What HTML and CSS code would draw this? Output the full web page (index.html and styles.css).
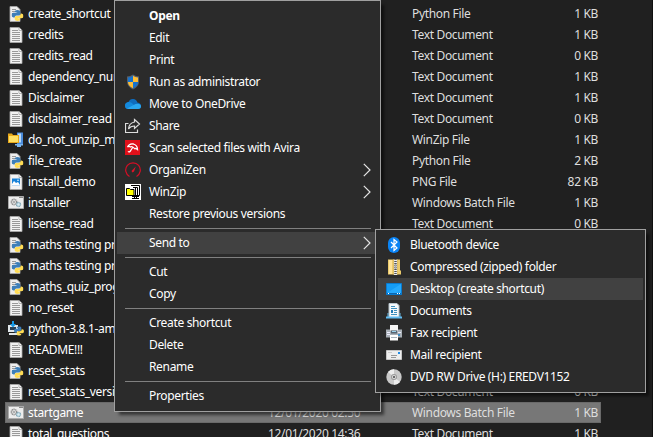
FILE: index.html
```
<!DOCTYPE html>
<html lang="en">
<head>
<meta charset="utf-8">
<title>Files</title>
<link rel="stylesheet" href="styles.css">
</head>
<body>
<svg class="defs" aria-hidden="true">
  <symbol id="page" viewBox="0 0 16 16"><path d="M2 .5h9l3 3v12H2z" fill="#f2f2f2" stroke="#aaa" stroke-width=".8"/><path d="M11 .5v3h3" fill="#fff" stroke="#999" stroke-width=".7"/></symbol>
  <symbol id="txt" viewBox="0 0 16 16"><use href="#page"/><path d="M4 3.5h6M4 5.5h8M4 7.5h8M4 9.5h8M4 11.5h8M4 13.5h8" stroke="#999"/></symbol>
  <symbol id="snakes" viewBox="0 0 12 12"><path d="M3.2 2.2Q3.2.5 6 .5t2.8 1.7v2.6Q8.800 6 7.200 6H5Q3.200 6 3.200 8H2Q0 7.800 0 5.600 0 3.200 2 3.200h4" fill="#3d7eb8"/><path d="M8.800 9.800Q8.800 11.500 6 11.500T3.200 9.800V7.800Q3.200 6.400 5 6.400h2Q9.300 6.400 9.300 4H10q2 .2 2 2.400 0 2.400-2 2.400H6" fill="#ffdc55"/></symbol>
  <symbol id="py" viewBox="0 0 16 16"><path d="M2 .5h7l3 3v12H2z" fill="#eee" stroke="#aaa" stroke-width=".8"/><path d="M4 3.500h4M4 5.500h3M4 7.500h1" stroke="#999"/><use href="#snakes" x="3.500" y="3.500" width="12" height="12"/></symbol>
  <symbol id="pyinst" viewBox="0 0 16 16"><path d="M0 4h10v7H0zM1 12h8v2H1z" fill="#dfe5e9"/><path d="M2 6h6v3H2z" fill="#294257"/><path d="M4 0h2v3h2L5 6.500 2 3h2z" fill="#159bea"/><use href="#snakes" x="6" y="5" width="10" height="10"/></symbol>
  <symbol id="bat" viewBox="0 0 16 16"><path d="M.5 1.500h15v12H.5z" fill="#ececec" stroke="#aaa"/><path d="M11 2.500h4" stroke="#888"/><circle cx="6" cy="7" r="2.700" fill="#ddd" stroke="#8c8c8c" stroke-width="1.500" stroke-dasharray="1.200 .5"/><circle cx="6" cy="7" r=".8" fill="#777"/><circle cx="10.500" cy="9.500" r="2" fill="#d8ebf2" stroke="#78a2b4" stroke-width="1.300" stroke-dasharray="1 .4"/></symbol>
  <symbol id="png" viewBox="0 0 16 16"><use href="#page"/><path d="M4 4.500h8v7H4z" fill="#1681d8"/><path d="M4 10l2-3 2 2 2-1 2 3v.5H4z" fill="#fff"/><circle cx="10" cy="6.200" r=".8" fill="#fff"/></symbol>
  <symbol id="zip" viewBox="0 0 16 16"><path d="M9 .5h6v11.500H9z" fill="#4b8ddd"/><path d="M10 1.500h3v9h-3z" fill="#b9d9f7"/><path d="M0 1.500h4l1 1.500h6v8H0z" fill="#e8a91b"/><path d="M1 4h9v6H1z" fill="#ffe063"/><path d="M7 12h8v1.500h-2V15H9v-1.500H7z" fill="#79b5f0"/></symbol>
  <symbol id="shield" viewBox="0 0 16 16"><path d="M8 .5q3 2 6 2v5q0 5-6 8-6-3-6-8v-5q3 0 6-2z" fill="#55606b"/><path d="M8 1.700V8H3V3.500q3-.3 5-1.800zM8 8h5q0 4-5 6.300z" fill="#1673cf"/><path d="M8 1.700V8h5V3.500q-3-.3-5-1.800zM8 8H3q0 4 5 6.300z" fill="#ffbd35"/></symbol>
  <symbol id="cloud" viewBox="0 0 16 16"><path d="M0 9.500Q0 6.500 3.500 6 5 2.500 8.300 3q3 .2 4.100 3.500Q16 7 16 10q0 3-3 3H3.500Q0 13 0 9.500z" fill="#0f6cbd"/><path d="M3.500 6Q6 5.800 8 8l5 4.500L3.500 13Q0 13 0 9.500 0 6.700 3.500 6z" fill="#1489dc"/><path d="M2 12.500L10.500 8q5.300-1 5.500 2.300Q16 13 13 13H4z" fill="#2aa7f1"/></symbol>
  <symbol id="share" viewBox="0 0 16 16"><path d="M3.500 5.500h-3v9h12v-3" fill="none" stroke="#ddd" stroke-width="1.200"/><path d="M9.500 1.500L14.500 6l-5 4.500V8Q5.500 8 3.500 11q.5-6 6-7z" fill="none" stroke="#ddd" stroke-width="1.200"/></symbol>
  <symbol id="avira" viewBox="0 0 16 16"><path d="M0 0h15v15H0z" fill="#e0101a"/><path d="M2.500 7Q4.500 3 8.500 4q4 1.200 4 5.500-1.500-1.500-3-.8Q7 5.700 5.500 7 4 5.800 2.500 7zM8 7l-3 4.500q-1 1-2-.2" fill="none" stroke="#fff" stroke-width="1.300"/></symbol>
  <symbol id="gauge" viewBox="0 0 16 16"><path d="M4.500 14.500A7.300 7.300 0 1 1 11.500 14.500" fill="none" stroke="#d50e25" stroke-width="1.200"/><path d="M10.800 4.500L9 9.500 7.500 10.500 6.500 9z" fill="#e01328"/></symbol>
  <symbol id="winzip" viewBox="0 0 16 16"><path d="M0 0h16v16H0z" fill="#fff"/><path d="M6 1.500h8.500v10H9" fill="none" stroke="#000"/><path d="M8 3.500h4.500v8M10.500 4v9" fill="none" stroke="#000"/><path d="M1.500 4.500h3l1 1H9v6H1.500z" fill="#ff0" stroke="#000"/><path d="M7 12.500h7M9.500 13v1.500M11.500 13v1.500M7 14.500h7" stroke="#000"/></symbol>
  <symbol id="bt" viewBox="0 0 16 16"><rect x="2" width="12" height="16" rx="6" fill="#0a84f5"/><path d="M5 5l6 6-3 2.500v-11L11 5l-6 6" fill="none" stroke="#fff" stroke-width="1.200"/></symbol>
  <symbol id="zfold" viewBox="0 0 16 16"><path d="M2 .5h12v11h1v4H2z" fill="#ebca6c"/><path d="M3 1h3v14H3z" fill="#ffe49a"/><path d="M7.500 0h4v16h-4z" fill="#d6b75f"/><path d="M9.500 0v16" stroke="#eee" stroke-width="3"/><path d="M9.500 0v16" stroke="#555" stroke-width="2.500" stroke-dasharray="1 1"/><path d="M8.500 5h2v5h-2z" fill="#aaa"/></symbol>
  <symbol id="desk" viewBox="0 0 16 16"><path d="M.5 2.500h15v11H.5z" fill="#159cf5" stroke="#087bd0"/><path d="M1 12L15 3v9z" fill="#27aafd"/><path d="M1 12h14v1H1z" fill="#0b67b0"/><path d="M2 12.500h1M11 12.500h1M13 12.500h1" stroke="#fff"/></symbol>
  <symbol id="docs" viewBox="0 0 16 16"><path d="M3 .5h8l2 2v12H3z" fill="#f5f8fa" stroke="#b8c4cc"/><path d="M5 3.500h4M5 5.500h6M8 7.500h3M8 9.500h3M5 11.500h6" stroke="#3e8fbd"/><path d="M5 7h2v3H5z" fill="#247ab5"/><path d="M2 10v4M14 10v4" stroke="#6dbbe5"/><path d="M0 13.500h16v2H0z" fill="#63bdf2"/></symbol>
  <symbol id="fax" viewBox="0 0 16 16"><path d="M4 0h8v6H4z" fill="#f5f5f5"/><path d="M0 4.500h4v1h8v-1h4v8H0z" fill="#a9b0b7"/><path d="M5 5.500h6v3H5z" fill="#576673"/><path d="M6 6.500h4" stroke="#9dd4ef"/><path d="M1 7.500h3M12 7.500h3M1 9.500h3" stroke="#eef"/><path d="M12 9h2v2h-2z" fill="#3f8ec7"/><path d="M4 10h8v5.500H4z" fill="#fff"/><path d="M5 12.500h6" stroke="#a7b4bd"/></symbol>
  <symbol id="mail" viewBox="0 0 16 16"><path d="M.5 3.500h15v9H.5z" fill="#eee" stroke="#c5c5c5"/><path d="M2 5.500h4" stroke="#ccc"/><path d="M5 8.500h6M5 10.500h5" stroke="#999"/><path d="M12 5h2v2h-2z" fill="#208be4"/></symbol>
  <symbol id="disc" viewBox="0 0 16 16"><circle cx="8" cy="8" r="7.700" fill="#c9c9c9"/><path d="M8 8L2 3A7.700 7.700 0 0 1 8 .3zM8 8l6 5a7.700 7.700 0 0 1-6 2.700z" fill="#ececec"/><circle cx="8" cy="8" r="3" fill="#999"/><circle cx="8" cy="8" r="2" fill="#ddd"/><circle cx="8" cy="8" r="1" fill="#444"/></symbol>
  <symbol id="arrow" viewBox="0 0 8 14"><path d="M.8 .8L7 7 .8 13.200" fill="none" stroke="#e5e5e5" stroke-width="1.200"/></symbol>
</svg>
<main class="window">
  <div class="files">
    <div class="row"><svg><use href="#py"/></svg><span class="name">create_shortcut</span><span class="date"></span><span class="type">Python File</span><span class="size">1 KB</span></div>
    <div class="row"><svg><use href="#txt"/></svg><span class="name">credits</span><span class="date"></span><span class="type">Text Document</span><span class="size">1 KB</span></div>
    <div class="row"><svg><use href="#txt"/></svg><span class="name">credits_read</span><span class="date"></span><span class="type">Text Document</span><span class="size">0 KB</span></div>
    <div class="row"><svg><use href="#txt"/></svg><span class="name">dependency_num</span><span class="date"></span><span class="type">Text Document</span><span class="size">1 KB</span></div>
    <div class="row"><svg><use href="#txt"/></svg><span class="name">Disclaimer</span><span class="date"></span><span class="type">Text Document</span><span class="size">1 KB</span></div>
    <div class="row"><svg><use href="#txt"/></svg><span class="name">disclaimer_read</span><span class="date"></span><span class="type">Text Document</span><span class="size">0 KB</span></div>
    <div class="row"><svg><use href="#zip"/></svg><span class="name">do_not_unzip_m</span><span class="date"></span><span class="type">WinZip File</span><span class="size">1 KB</span></div>
    <div class="row"><svg><use href="#py"/></svg><span class="name">file_create</span><span class="date"></span><span class="type">Python File</span><span class="size">2 KB</span></div>
    <div class="row"><svg><use href="#png"/></svg><span class="name">install_demo</span><span class="date"></span><span class="type">PNG File</span><span class="size">82 KB</span></div>
    <div class="row"><svg><use href="#bat"/></svg><span class="name">installer</span><span class="date"></span><span class="type">Windows Batch File</span><span class="size">1 KB</span></div>
    <div class="row"><svg><use href="#txt"/></svg><span class="name">lisense_read</span><span class="date"></span><span class="type">Text Document</span><span class="size">0 KB</span></div>
    <div class="row"><svg><use href="#py"/></svg><span class="name">maths testing pr</span></div>
    <div class="row"><svg><use href="#py"/></svg><span class="name">maths testing pr</span></div>
    <div class="row"><svg><use href="#py"/></svg><span class="name">maths_quiz_prog</span></div>
    <div class="row"><svg><use href="#txt"/></svg><span class="name">no_reset</span></div>
    <div class="row"><svg><use href="#pyinst"/></svg><span class="name">python-3.8.1-am</span></div>
    <div class="row"><svg><use href="#txt"/></svg><span class="name">README!!!</span></div>
    <div class="row"><svg><use href="#py"/></svg><span class="name">reset_stats</span></div>
    <div class="row"><svg><use href="#txt"/></svg><span class="name">reset_stats_versio</span><span class="date"></span><span class="type">Text Document</span><span class="size">0 KB</span></div>
    <div class="row selected"><svg><use href="#bat"/></svg><span class="name">startgame</span><span class="date">12/01/2020 02:50</span><span class="type">Windows Batch File</span><span class="size">1 KB</span></div>
    <div class="row"><svg><use href="#txt"/></svg><span class="name">total_questions</span><span class="date">12/01/2020 14:36</span><span class="type">Text Document</span><span class="size">1 KB</span></div>
  </div>
  <div class="menu context">
    <div class="item"><i></i><b>Open</b></div>
    <div class="item"><i></i><span>Edit</span></div>
    <div class="item"><i></i><span>Print</span></div>
    <div class="item"><svg><use href="#shield"/></svg><span>Run as administrator</span></div>
    <div class="item"><svg><use href="#cloud"/></svg><span>Move to OneDrive</span></div>
    <div class="item"><svg><use href="#share"/></svg><span>Share</span></div>
    <div class="item"><svg><use href="#avira"/></svg><span>Scan selected files with Avira</span></div>
    <div class="item"><svg><use href="#gauge"/></svg><span>OrganiZen</span><svg class="arrow"><use href="#arrow"/></svg></div>
    <div class="item"><svg><use href="#winzip"/></svg><span>WinZip</span><svg class="arrow"><use href="#arrow"/></svg></div>
    <div class="item"><i></i><span>Restore previous versions</span></div>
    <hr>
    <div class="item active"><i></i><span>Send to</span><svg class="arrow"><use href="#arrow"/></svg></div>
    <hr>
    <div class="item"><i></i><span>Cut</span></div>
    <div class="item"><i></i><span>Copy</span></div>
    <hr>
    <div class="item"><i></i><span>Create shortcut</span></div>
    <div class="item"><i></i><span>Delete</span></div>
    <div class="item"><i></i><span>Rename</span></div>
    <hr>
    <div class="item"><i></i><span>Properties</span></div>
  </div>
  <div class="menu submenu">
    <div class="item"><svg><use href="#bt"/></svg><span>Bluetooth device</span></div>
    <div class="item"><svg><use href="#zfold"/></svg><span>Compressed (zipped) folder</span></div>
    <div class="item active"><svg><use href="#desk"/></svg><span>Desktop (create shortcut)</span></div>
    <div class="item"><svg><use href="#docs"/></svg><span>Documents</span></div>
    <div class="item"><svg><use href="#fax"/></svg><span>Fax recipient</span></div>
    <div class="item"><svg><use href="#mail"/></svg><span>Mail recipient</span></div>
    <div class="item"><svg><use href="#disc"/></svg><span>DVD RW Drive (H:) EREDV1152</span></div>
  </div>
</main>
</body>
</html>
```
FILE: styles.css
```
* { box-sizing: border-box; }
body { margin: 0; background: #202020; }
.defs { position: absolute; width: 0; height: 0; }
.window {
  position: relative;
  width: 653px;
  height: 437px;
  overflow: hidden;
  background: #202020;
  border-right: 1px solid #101010;
  color: #fff;
  font: 12px/20px "Noto Sans", "Open Sans", sans-serif;
  letter-spacing: -0.34px;
  white-space: nowrap;
}
.files { padding: 3px 0 0 5px; }
.row {
  display: grid;
  grid-template-columns: 19px 240px 144px 120px 1fr;
  width: 596px;
  height: 21px;
  padding: 0 3px 0 4px;
  align-items: center;
}
.row svg { width: 16px; height: 16px; margin-left: -1px; }
.row.selected { background: #777; box-shadow: inset 0 0 0 1px #6a6a6a; }
.date, .type, .size { color: #dedede; }
.size { text-align: right; }
.menu {
  position: absolute;
  background: #2b2b2b;
  border: 1px solid #a0a0a0;
  padding: 4px 2px;
  box-shadow: 4px 4px 3px -1px rgba(0, 0, 0, .55);
}
.context { left: 114px; top: 0; width: 267px; }
.submenu { left: 375px; top: 229px; width: 271px; }
.item {
  display: grid;
  grid-template-columns: 24px 1fr 8px;
  height: 22px;
  padding: 0 7px 0 8px;
  align-items: center;
}
.item svg, .item i { width: 16px; height: 16px; }
.item .arrow { width: 8px; height: 14px; }
.active { background: #414141; }
.menu hr {
  height: 1px;
  margin: 3px 7px 3px 8px;
  border: 0;
  background: #808080;
}
```
